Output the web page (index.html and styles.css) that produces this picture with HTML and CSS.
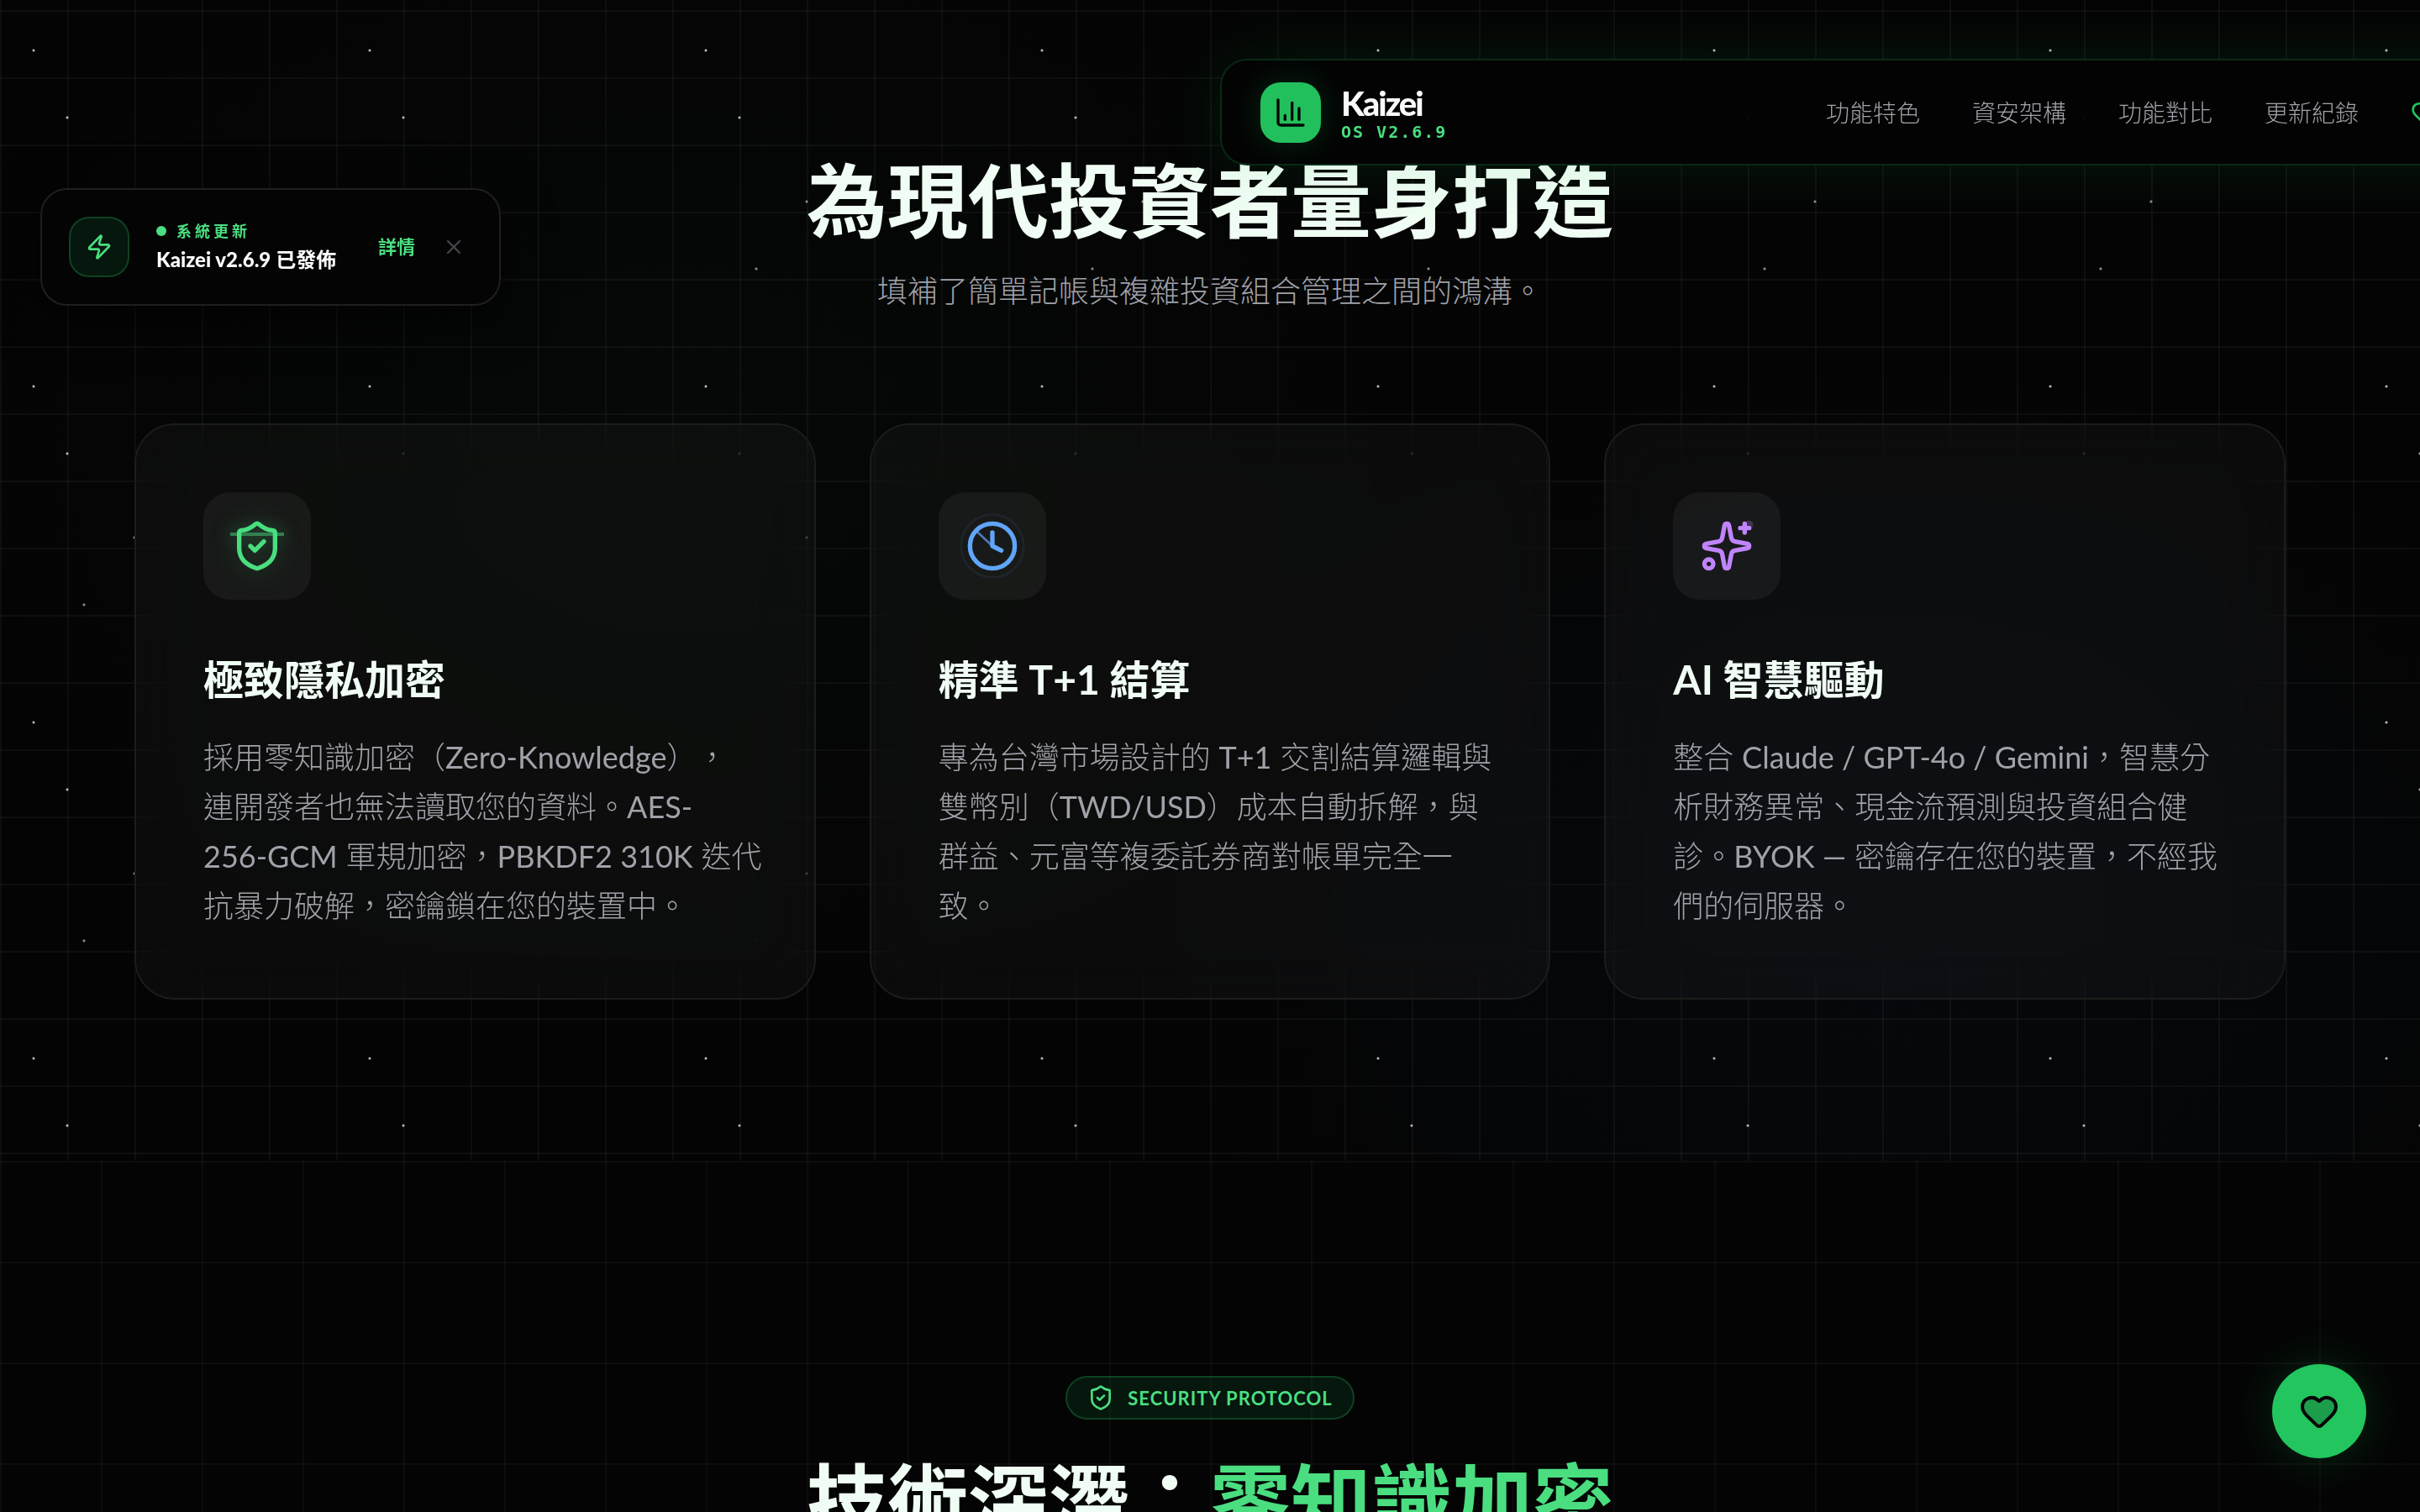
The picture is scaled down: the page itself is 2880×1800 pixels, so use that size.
FILE: index.html
```html
<!DOCTYPE html>
<html lang="zh-Hant">
<head>
    <meta charset="UTF-8">
    <meta name="viewport" content="width=device-width, initial-scale=1.0">
    <title>Kaizei</title>
    <link rel="stylesheet" href="styles.css">
</head>
<body>
    <header class="nav">
        <a class="brand" href="#">
            <span class="brand-icon">
                <svg class="icon" width="40" height="40" viewBox="0 0 24 24"><path d="M3 3v16a2 2 0 0 0 2 2h16"/><path d="M18 17V9"/><path d="M13 17V5"/><path d="M8 17v-3"/></svg>
            </span>
            <span class="brand-text">
                <span class="brand-name">Kaizei</span>
                <span class="brand-version">OS V2.6.9</span>
            </span>
        </a>
        <nav class="nav-links">
            <a href="#features">功能特色</a>
            <a href="#security">資安架構</a>
            <a href="#compare">功能對比</a>
            <a href="#changelog">更新紀錄</a>
            <a class="nav-heart" href="#support" aria-label="贊助">
                <svg class="icon" width="32" height="32" viewBox="0 0 24 24"><path d="M2 9.5a5.5 5.5 0 0 1 9.591-3.676.56.56 0 0 0 .818 0A5.49 5.49 0 0 1 22 9.5c0 2.29-1.5 4-3 5.5l-5.492 5.313a2 2 0 0 1-3 .019L5 15c-1.5-1.5-3-3.2-3-5.5"/></svg>
            </a>
        </nav>
    </header>

    <aside class="toast">
        <span class="toast-icon">
            <svg class="icon" width="32" height="32" viewBox="0 0 24 24"><path d="M4 14a1 1 0 0 1-.78-1.63l9.9-10.2a.5.5 0 0 1 .86.46l-1.92 6.02A1 1 0 0 0 13 10h7a1 1 0 0 1 .78 1.63l-9.9 10.2a.5.5 0 0 1-.86-.46l1.92-6.02A1 1 0 0 0 11 14z"/></svg>
        </span>
        <div class="toast-body">
            <span class="toast-label">系統更新</span>
            <strong class="toast-title"><span class="latin">Kaizei v2.6.9</span> 已發佈</strong>
        </div>
        <a class="toast-link" href="#changelog">詳情</a>
        <button class="toast-close" type="button" aria-label="關閉">
            <svg class="icon" width="28" height="28" viewBox="0 0 24 24"><path d="M18 6 6 18"/><path d="m6 6 12 12"/></svg>
        </button>
    </aside>

    <main>
        <section class="features" id="features">
            <h2 class="heading">為現代投資者量身打造</h2>
            <p class="subtitle">填補了簡單記帳與複雜投資組合管理之間的鴻溝。</p>

            <div class="cards">
                <article class="card">
                    <div class="card-icon green">
                        <svg class="icon" width="64" height="64" viewBox="0 0 24 24"><path d="M20 13c0 5-3.5 7.5-7.66 8.95a1 1 0 0 1-.67-.01C7.5 20.5 4 18 4 13V6a1 1 0 0 1 1-1c2 0 4.5-1.2 6.24-2.72a1.17 1.17 0 0 1 1.52 0C14.51 3.81 17 5 19 5a1 1 0 0 1 1 1z"/><path d="m9 12 2 2 4-4"/></svg>
                        <span class="scan"></span>
                    </div>
                    <h3>極致隱私加密</h3>
                    <p>
                        採用零知識加密（<span class="latin">Zero-Knowledge</span>），<br>
                        連開發者也無法讀取您的資料。<span class="latin">AES-</span><br>
                        <span class="latin">256-GCM</span> 軍規加密，<span class="latin">PBKDF2 310K</span> 迭代<br>
                        抗暴力破解，密鑰鎖在您的裝置中。
                    </p>
                </article>
                <article class="card">
                    <div class="card-icon blue">
                        <svg class="icon" width="64" height="64" viewBox="0 0 24 24"><circle class="ring" cx="12" cy="12" r="14"/><circle cx="12" cy="12" r="10"/><path d="M12 6v6l4 2"/><path class="hand" d="M12 12 5.6 6"/></svg>
                    </div>
                    <h3>精準 <span class="latin">T+1</span> 結算</h3>
                    <p>
                        專為台灣市場設計的 <span class="latin">T+1</span> 交割結算邏輯與<br>
                        雙幣別（<span class="latin">TWD/USD</span>）成本自動拆解，與<br>
                        群益、元富等複委託券商對帳單完全一<br>
                        致。
                    </p>
                </article>
                <article class="card">
                    <div class="card-icon purple">
                        <svg class="icon" width="64" height="64" viewBox="0 0 24 24"><circle class="spark" cx="22" cy="2.5" r="1.8"/><path d="M11.017 2.814a1 1 0 0 1 1.966 0l1.051 5.558a2 2 0 0 0 1.594 1.594l5.558 1.051a1 1 0 0 1 0 1.966l-5.558 1.051a2 2 0 0 0-1.594 1.594l-1.051 5.558a1 1 0 0 1-1.966 0l-1.051-5.558a2 2 0 0 0-1.594-1.594l-5.558-1.051a1 1 0 0 1 0-1.966l5.558-1.051a2 2 0 0 0 1.594-1.594z"/><path d="M20 2v4"/><path d="M22 4h-4"/><circle cx="4" cy="20" r="2"/></svg>
                    </div>
                    <h3><span class="latin">AI</span> 智慧驅動</h3>
                    <p>
                        整合 <span class="latin">Claude / GPT-4o / Gemini</span>，智慧分<br>
                        析財務異常、現金流預測與投資組合健<br>
                        診。<span class="latin">BYOK —</span> 密鑰存在您的裝置，不經我<br>
                        們的伺服器。
                    </p>
                </article>
            </div>
        </section>

        <section class="security" id="security">
            <div class="badge">
                <svg class="icon" width="32" height="32" viewBox="0 0 24 24"><path d="M20 13c0 5-3.5 7.5-7.66 8.95a1 1 0 0 1-.67-.01C7.5 20.5 4 18 4 13V6a1 1 0 0 1 1-1c2 0 4.5-1.2 6.24-2.72a1.17 1.17 0 0 1 1.52 0C14.51 3.81 17 5 19 5a1 1 0 0 1 1 1z"/><path d="m9 12 2 2 4-4"/></svg>
                <span>SECURITY PROTOCOL</span>
            </div>
            <h2 class="heading">技術深潛：<span class="accent">零知識加密</span></h2>
        </section>
    </main>

    <button class="fab" type="button" aria-label="贊助">
        <svg class="icon" width="48" height="48" viewBox="0 0 24 24"><path d="M2 9.5a5.5 5.5 0 0 1 9.591-3.676.56.56 0 0 0 .818 0A5.49 5.49 0 0 1 22 9.5c0 2.29-1.5 4-3 5.5l-5.492 5.313a2 2 0 0 1-3 .019L5 15c-1.5-1.5-3-3.2-3-5.5"/></svg>
    </button>
</body>
</html>
```
FILE: styles.css
```css
* {
    box-sizing: border-box;
}
body {
    margin: 0;
    height: 100vh;
    overflow: hidden;
    background-color: #040404;
    color: #f0fdf4;
    font-family: Lato, "Noto Sans CJK TC", sans-serif;
    text-spacing-trim: space-all;
}
h2, h3, p {
    margin: 0;
}
a {
    color: inherit;
    text-decoration: none;
}
button {
    border: none;
    padding: 0;
    background: none;
    cursor: pointer;
}
.icon {
    display: block;
    overflow: visible;
    fill: none;
    stroke: currentColor;
    stroke-width: 2;
    stroke-linecap: round;
    stroke-linejoin: round;
}

/* floating nav */
.nav {
    position: fixed;
    z-index: 10;
    top: 70px;
    left: calc(50% + 12px);
    width: 100%;
    height: 127px;
    display: flex;
    align-items: center;
    gap: 455px;
    padding: 0 46px;
    border: 2px solid rgba(34, 197, 94, 0.2);
    border-radius: 32px;
    background-color: rgba(3, 3, 3, 0.96);
    box-shadow: 0 0 80px rgba(34, 197, 94, 0.12);
}
.brand {
    display: flex;
    align-items: center;
    gap: 24px;
    width: 218px;
    white-space: nowrap;
}
.brand-icon {
    display: flex;
    align-items: center;
    justify-content: center;
    width: 72px;
    height: 72px;
    flex: none;
    border-radius: 24px;
    background-color: #22c05c;
    color: #050505;
    box-shadow: 0 0 40px rgba(34, 197, 94, 0.2);
}
.brand-text {
    display: flex;
    flex-direction: column;
    gap: 4px;
    padding-top: 2px;
}
.brand-name {
    font-size: 40px;
    line-height: 40px;
    font-weight: 900;
    letter-spacing: -2px;
    color: #fafafa;
}
.brand-version {
    font-family: "DejaVu Sans Mono", monospace;
    font-size: 20px;
    line-height: 20px;
    font-weight: 700;
    letter-spacing: 2px;
    color: #4ade80;
}
.nav-links {
    display: flex;
    align-items: center;
    gap: 62px;
    font-size: 28px;
    line-height: 40px;
    font-weight: 300;
    color: #a1a1aa;
    white-space: nowrap;
}
.nav-heart {
    color: #22c55e;
}

/* update toast */
.toast {
    position: fixed;
    z-index: 9;
    top: 224px;
    left: 48px;
    height: 140px;
    display: flex;
    align-items: center;
    padding: 0 32px;
    border: 2px solid #1f1f1f;
    border-radius: 32px;
    background-color: #040404;
    box-shadow: 0 16px 60px rgba(0, 0, 0, 0.6);
    white-space: nowrap;
}
.toast-icon {
    display: flex;
    align-items: center;
    justify-content: center;
    width: 72px;
    height: 72px;
    border: 2px solid rgba(34, 197, 94, 0.25);
    border-radius: 24px;
    background-color: rgba(34, 197, 94, 0.1);
    color: #4ade80;
}
.toast-body {
    display: flex;
    flex-direction: column;
    gap: 2px;
    width: 216px;
    margin: 0 48px 0 32px;
}
.toast-label {
    display: flex;
    align-items: center;
    gap: 12px;
    font-size: 18px;
    line-height: 28px;
    font-weight: 700;
    letter-spacing: 4px;
    color: #4ade80;
}
.toast-label::before {
    content: "";
    width: 12px;
    height: 12px;
    border-radius: 50%;
    background-color: #4ade80;
}
.toast-title {
    font-size: 24px;
    line-height: 36px;
    color: #ffffff;
}
.toast-title .latin {
    font-weight: 900;
}
.toast-link {
    font-size: 22px;
    line-height: 32px;
    font-weight: 700;
    color: #4ade80;
}
.toast-close {
    margin-left: 24px;
    padding: 8px;
    color: #44444a;
}

/* features */
.features {
    padding: 190px 160px 192px;
    text-align: center;
    background-image:
        radial-gradient(circle at 40px 60px, #b4b4b4 1px, transparent 2px),
        radial-gradient(circle at 80px 140px, #b4b4b4 1px, transparent 2px),
        radial-gradient(circle at 160px 240px, #8c8c8c 1px, transparent 2px),
        radial-gradient(circle at 100px 320px, #8c8c8c 1px, transparent 2px),
        linear-gradient(to right, rgba(255, 255, 255, 0.04) 2px, transparent 2px),
        linear-gradient(to bottom, rgba(255, 255, 255, 0.04) 2px, transparent 2px),
        radial-gradient(900px 700px at 28% 38%, rgba(34, 197, 94, 0.025), transparent),
        radial-gradient(900px 700px at 78% 80%, rgba(59, 130, 246, 0.035), transparent);
    background-size: 400px 400px, 400px 400px, 400px 400px, 400px 400px, 80px 80px, 80px 80px, 100% 100%, 100% 100%;
    background-position: 0 0, 0 0, 0 0, 0 0, 0 0, 0 12px, 0 0, 0 0;
}
.heading {
    font-size: 96px;
    line-height: 96px;
    font-weight: 700;
}
.subtitle {
    margin-top: 32px;
    font-size: 36px;
    line-height: 56px;
    font-weight: 300;
    color: #a1a1aa;
}
.cards {
    display: grid;
    grid-template-columns: repeat(3, minmax(0, 1fr));
    gap: 64px;
    margin-top: 130px;
    text-align: left;
}
.card {
    padding: 80px;
    border: 2px solid #1b1c1b;
    border-radius: 48px;
    background-color: rgba(255, 255, 255, 0.03);
    backdrop-filter: blur(40px);
}
.card-icon {
    position: relative;
    display: flex;
    align-items: center;
    justify-content: center;
    width: 128px;
    height: 128px;
    border-radius: 32px;
    background-color: rgba(255, 255, 255, 0.05);
}
.green {
    color: #4ade80;
}
.green .icon {
    filter: drop-shadow(0 0 16px rgba(74, 222, 128, 0.3));
}
.blue {
    color: #60a5fa;
}
.purple {
    color: #c084fc;
}
/* scan line over the shield */
.scan {
    position: absolute;
    top: 48px;
    left: 32px;
    width: 64px;
    height: 4px;
    background-color: rgba(74, 222, 128, 0.5);
    box-shadow: 0 0 20px rgba(74, 222, 128, 0.5);
}
.ring {
    stroke-width: 1;
    opacity: 0.08;
}
.hand {
    stroke-width: 1;
    opacity: 0.7;
}
.spark {
    fill: currentColor;
    stroke: none;
    opacity: 0.25;
}
.card h3 {
    margin-top: 64px;
    font-size: 48px;
    line-height: 62px;
    font-weight: 700;
}
.card p {
    margin-top: 32px;
    font-size: 36px;
    line-height: 59px;
    font-weight: 300;
    color: #a1a1aa;
    white-space: nowrap;
}
.card p .latin {
    font-weight: 400;
}

/* security */
.security {
    display: flex;
    flex-direction: column;
    align-items: center;
    gap: 48px;
    padding: 256px 160px;
    background-image:
        linear-gradient(to right, rgba(255, 255, 255, 0.03) 2px, transparent 2px),
        linear-gradient(to bottom, rgba(255, 255, 255, 0.03) 2px, transparent 2px);
    background-size: 120px 120px;
}
.badge {
    display: flex;
    align-items: center;
    gap: 16px;
    height: 52px;
    padding: 0 24px;
    border: 2px solid rgba(34, 197, 94, 0.25);
    border-radius: 26px;
    background-color: rgba(34, 197, 94, 0.1);
    font-size: 22px;
    font-weight: 700;
    letter-spacing: 1px;
    color: #4ade80;
}
.accent {
    color: #4ade80;
}

.fab {
    position: fixed;
    z-index: 10;
    right: 64px;
    bottom: 64px;
    display: flex;
    align-items: center;
    justify-content: center;
    width: 112px;
    height: 112px;
    border-radius: 50%;
    background-color: #22c55e;
    color: #050505;
    box-shadow: 0 0 60px rgba(34, 197, 94, 0.2);
}
.fab path {
    fill: rgba(0, 0, 0, 0.2);
}
```
